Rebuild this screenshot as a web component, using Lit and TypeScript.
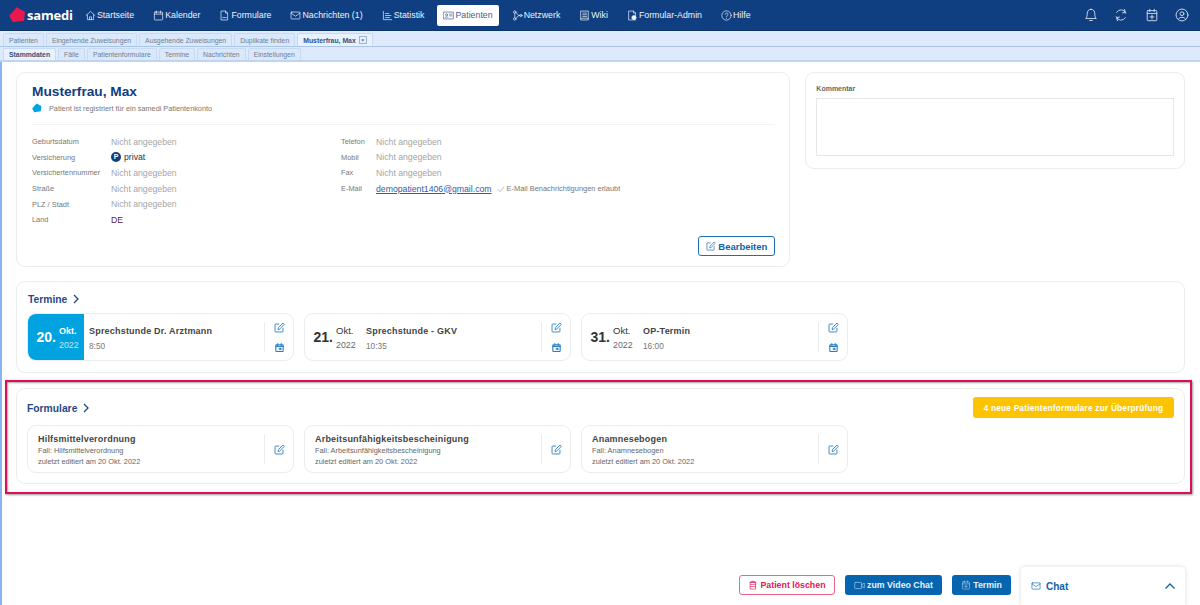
import { LitElement, css, html, svg } from 'lit';
import { customElement } from 'lit/decorators.js';

const ico = (size: number, body: unknown, sw = 1) => html`<svg width=${size} height=${size} viewBox="0 0 16 16" fill="none" stroke="currentColor" stroke-width=${sw} stroke-linecap="round" stroke-linejoin="round">${body}</svg>`;

const icons: Record<string, unknown> = {
	home: svg`<path d="M1.5 8 8 2l6.5 6"/><path d="M3.5 7v7h9V7"/><path d="M6.5 14v-4h3v4"/>`,
	cal: svg`<rect x="2" y="3" width="12" height="11.5" rx="1"/><path d="M2 6h12M5 1.5v3M11 1.5v3"/>`,
	doc: svg`<path d="M3.5 1.5h6l3 3v10h-9z"/><path d="M9.5 1.5v3h3M5.5 11h5"/>`,
	mail: svg`<rect x="1.5" y="3" width="13" height="10" rx="1"/><path d="m1.5 4.5 6.5 4.5 6.5-4.5"/>`,
	chart: svg`<path d="M2 2v12h12"/><path d="M5 5h5M5 8h8M5 11h6"/>`,
	card: svg`<rect x="1" y="3" width="14" height="10"/><circle cx="5.2" cy="7" r="1.5"/><path d="M3 11c.4-1.8 4-1.8 4.4 0M9.5 6H13M9.5 8.5H13"/>`,
	net: svg`<circle cx="4" cy="3" r="1.8"/><circle cx="4" cy="13" r="1.8"/><circle cx="13" cy="8" r="1.6"/><path d="M4 4.8v6.4M5.8 3.5C8 5 7 8 11.4 8M5.8 12.5C8 11 7 8 11.4 8"/>`,
	book: svg`<path d="M3 1.5h10.5v13H3z"/><path d="M3 12h10.5M5.5 4.5H11M5.5 7H11M5.5 9.5H11"/>`,
	admin: svg`<path d="M3 1.5h6.5l3 3v10H3z"/><path d="M9.5 1.5v3h3"/><circle cx="10" cy="11" r="3" fill="currentColor"/>`,
	help: svg`<circle cx="8" cy="8" r="6.8"/><path d="M6 6.2C6 3.6 10.2 3.7 10.2 6.2 10.2 8 8 8 8 9.8"/><path d="M8 12v.2"/>`,
	bell: svg`<path d="M8 1.5c-3 0-4.3 2.3-4.3 5 0 3-.7 4.3-1.7 5.5h12c-1-1.2-1.7-2.5-1.7-5.5 0-2.7-1.3-5-4.3-5z"/><path d="M6.5 14.3h3"/>`,
	sync: svg`<path d="M13.5 6A5.8 5.8 0 0 0 3 5M2.5 10A5.8 5.8 0 0 0 13 11"/><path d="M12 1.5 13 5l-3.2.6M4 14.5 3 11l3.2-.6"/>`,
	calplus: svg`<rect x="2.5" y="3" width="11" height="11.5" rx="1"/><path d="M2.5 6.2h11M5.5 1.5V4M10.5 1.5V4M8 8v4.5M5.8 10.2h4.4"/>`,
	user: svg`<circle cx="8" cy="8" r="6.8"/><circle cx="8" cy="6.5" r="2.2"/><path d="M4 12.8c.6-3 7.4-3 8 0"/>`,
	edit: svg`<path d="M13 9v4.5a1 1 0 0 1-1 1H2.5a1 1 0 0 1-1-1V4a1 1 0 0 1 1-1H7"/><path d="M6 10.5 6.6 8 13 1.5l2 2L8.5 10z"/>`,
	trash: svg`<path d="M3 3.5h10M6 3.5V2h4v1.5"/><path d="M4 3.5h8v11H4z"/><path d="M4 7h8M4 10.5h8"/>`,
	video: svg`<rect x="1" y="3.5" width="10" height="9" rx="1"/><path d="m11 7 4-2.5v7L11 9"/>`,
};

const NAV = [
	['home', 'Startseite'], ['cal', 'Kalender'], ['doc', 'Formulare'], ['mail', 'Nachrichten (1)'],
	['chart', 'Statistik'], ['card', 'Patienten'], ['net', 'Netzwerk'], ['book', 'Wiki'],
	['admin', 'Formular-Admin'], ['help', 'Hilfe'],
];

const TABS = ['Patienten', 'Eingehende Zuweisungen', 'Ausgehende Zuweisungen', 'Duplikate finden'];
const SUBTABS = ['Stammdaten', 'Fälle', 'Patientenformulare', 'Termine', 'Nachrichten', 'Einstellungen'];

const NA = 'Nicht angegeben';
const LEFT = [['Geburtsdatum', NA], ['Versicherung', 'privat'], ['Versichertennummer', NA], ['Straße', NA], ['PLZ / Stadt', NA], ['Land', 'DE']];
const RIGHT = [['Telefon', NA], ['Mobil', NA], ['Fax', NA]];

const APPTS = [
	{ day: '20.', mon: 'Okt.', year: '2022', title: 'Sprechstunde Dr. Arztmann', time: '8:50', today: true },
	{ day: '21.', mon: 'Okt.', year: '2022', title: 'Sprechstunde - GKV', time: '10:35', today: false },
	{ day: '31.', mon: 'Okt.', year: '2022', title: 'OP-Termin', time: '16:00', today: false },
];

const FORMS = ['Hilfsmittelverordnung', 'Arbeitsunfähigkeitsbescheinigung', 'Anamnesebogen'];

const PENTAGON = 'M.3 8.7 7.7.3 16 4.7 15 13.7 3.7 15.3z';

@customElement('app-root')
export class AppRoot extends LitElement {
	static styles = css`
    :host {
      display: block;
      position: relative;
      width: 1200px;
      height: 605px;
      overflow: hidden;
      background: #fff;
      font-family: "Liberation Sans", Arial, sans-serif;
      color: #555;
    }

    .nav {
      height: 31px;
      background: #0f3f80;
      display: flex;
      align-items: center;
      color: #fff;
      font-size: 8.8px;
      box-sizing: border-box;
      border-bottom: 1px solid #0c3468;
    }

    .logo {
      display: flex;
      align-items: center;
      width: 79px;
      padding-left: 9px;
      box-sizing: border-box;
      flex: none;
      gap: 1px;
    }

    .logo b {
      font-family: "Open Sans", sans-serif;
      font-size: 13px;
      font-weight: 700;
      letter-spacing: -0.2px;
    }

    .nav-item {
      display: flex;
      align-items: center;
      gap: 1px;
      height: 21px;
      padding: 0 6px;
      margin-right: 7px;
      border-radius: 2px;
      color: #eef3f9;
      white-space: nowrap;
    }

    .nav-item.active {
      background: #fff;
      color: #44618c;
    }

    .nav-right {
      margin-left: auto;
      display: flex;
      gap: 16.5px;
      padding-right: 11px;
      color: #dbe5f1;
    }

    .tabs {
      height: 16px;
      background: #dceafc;
      border-bottom: 1px solid #a9c6ea;
      box-sizing: border-box;
      display: flex;
      gap: 2px;
      padding: 2px 0 0 3px;
      font-size: 6.85px;
      color: #6d7f96;
    }

    .tabs.sub {
      height: 15px;
      border-bottom: 2px solid #bcd5f3;
      padding-top: 1px;
    }

    .tab {
      display: flex;
      align-items: center;
      gap: 3px;
      padding: 0 5px;
      border: 1px solid #c6daf3;
      border-bottom: 0;
      background: #d9e8fb;
      border-radius: 2px 2px 0 0;
      white-space: nowrap;
    }

    .tab.active {
      background: #e8f1fd;
      color: #33517f;
      font-weight: 700;
    }

    .close {
      width: 6px;
      height: 6px;
      border: 1px solid #9db4d2;
      font-size: 6px;
      line-height: 6px;
      text-align: center;
      font-weight: 400;
    }

    .page {
      height: 543px;
      border-left: 2px solid #8ab4f0;
      padding: 10px 15px 0 14px;
      box-sizing: border-box;
    }

    .top {
      display: flex;
      align-items: flex-start;
      gap: 15px;
    }

    .card {
      border: 1px solid #ececec;
      border-radius: 9px;
      background: #fff;
      box-sizing: border-box;
    }

    .patient {
      width: 775px;
      height: 195px;
      padding: 10px 14px 9px 15px;
      display: flex;
      flex-direction: column;
    }

    h1 {
      margin: 0;
      font-size: 13.7px;
      line-height: 18px;
      color: #10407f;
    }

    .reg {
      display: flex;
      align-items: center;
      gap: 7px;
      font-size: 7.3px;
      color: #777;
      margin-top: 2px;
      padding-bottom: 11px;
      border-bottom: 1px solid #f2f2f2;
    }

    .cols {
      display: flex;
      margin-top: 9px;
    }

    .col-l {
      width: 309px;
      display: grid;
      grid-template-columns: 79px 1fr;
      grid-auto-rows: 15.6px;
      align-items: center;
    }

    .col-r {
      display: grid;
      grid-template-columns: 35px 1fr;
      grid-auto-rows: 15.6px;
      align-items: center;
    }

    .lbl {
      font-size: 7.4px;
      color: #777;
    }

    .val {
      font-size: 8.7px;
      color: #a5a5a5;
      display: flex;
      align-items: center;
      gap: 3px;
    }

    .val.dark {
      color: #333;
    }

    .val.de {
      color: #5a2440;
    }

    .pbadge {
      width: 10px;
      height: 10px;
      border-radius: 50%;
      background: #10407f;
      color: #fff;
      font-size: 7px;
      font-weight: 700;
      line-height: 10px;
      text-align: center;
    }

    .val a {
      color: #2f5da6;
      text-decoration: underline;
    }

    .allowed {
      display: inline-flex;
      align-items: center;
      gap: 2px;
      margin-left: 2px;
      font-size: 7.45px;
      color: #777;
    }

    .edit-row {
      margin-top: auto;
      margin-bottom: 1px;
      display: flex;
      justify-content: flex-end;
    }

    .btn {
      display: inline-flex;
      align-items: center;
      justify-content: center;
      gap: 2px;
      height: 20px;
      border-radius: 3px;
      box-sizing: border-box;
      font-size: 8.8px;
      font-weight: 700;
      white-space: nowrap;
    }

    .btn.outline {
      width: 77px;
      border: 1px solid #1a70b8;
      color: #0f62ac;
      font-size: 9.5px;
    }

    .comment {
      width: 380px;
      height: 97px;
      padding: 11px 10px;
    }

    .comment label {
      display: block;
      font-size: 7px;
      font-weight: 700;
      color: #666;
      line-height: 9px;
    }

    .comment div {
      height: 58px;
      margin-top: 5px;
      border: 1px solid #e6e6e6;
      box-sizing: border-box;
    }

    .section {
      margin-top: 14px;
      width: 1169px;
      height: 92px;
      padding: 9px 10px 0;
    }

    .sec-head {
      display: flex;
      align-items: center;
      justify-content: space-between;
      height: 16px;
      margin-left: 1px;
    }

    .sec-title {
      display: flex;
      align-items: center;
      gap: 6px;
      font-size: 10.3px;
      font-weight: 700;
      color: #1f4a85;
    }

    .items {
      display: flex;
      gap: 10px;
      margin-top: 6px;
    }

    .item {
      width: 267px;
      height: 48px;
      border: 1px solid #ececec;
      border-radius: 9px;
      box-sizing: border-box;
      display: flex;
      overflow: hidden;
    }

    .date {
      width: 56px;
      flex: none;
      display: flex;
      align-items: center;
      justify-content: flex-end;
      gap: 2px;
      color: #333;
      padding-right: 5px;
      box-sizing: border-box;
    }

    .date.today {
      background: #00a3e0;
      color: #fff;
    }

    .day {
      font-size: 14px;
      font-weight: 700;
      margin-right: 1px;
    }

    .stamp {
      padding-top: 2px;
      width: 20px;
    }

    .mon {
      font-size: 9.5px;
      line-height: 14px;
    }

    .today .mon {
      font-weight: 700;
      font-size: 9px;
    }

    .year {
      font-size: 8.8px;
      line-height: 14px;
      opacity: .75;
    }

    .info {
      flex: 1;
      padding: 2px 0 0 5px;
      min-width: 0;
      display: flex;
      flex-direction: column;
      justify-content: center;
      gap: 5px;
    }

    .title {
      font-size: 9px;
      font-weight: 700;
      letter-spacing: .2px;
      color: #444;
      white-space: nowrap;
    }

    .time {
      font-size: 8.3px;
      color: #777;
    }

    .actions {
      width: 28px;
      flex: none;
      margin: 8px 0;
      border-left: 1px solid #ececec;
      display: flex;
      flex-direction: column;
      align-items: center;
      justify-content: space-between;
      color: #2a7fc4;
    }

    .form-info {
      flex: 1;
      padding: 2px 0 0 10px;
      display: flex;
      flex-direction: column;
      justify-content: center;
      font-size: 7.4px;
      line-height: 10.5px;
      color: #666;
    }

    .form-info .title {
      line-height: 13px;
    }

    .highlight {
      margin: 7px 0 0 -11px;
      width: 1187px;
      height: 114px;
      border: 2px solid #de0f50;
      box-sizing: border-box;
      padding: 6px 0 0 9px;
      box-shadow: 1px 1px 2px rgba(0, 0, 0, .4), inset 1px 1px 2px rgba(0, 0, 0, .35);
    }

    .highlight .section {
      margin-top: 0;
      height: 96px;
      padding-top: 11px;
    }

    .highlight .sec-title {
      margin-left: -1px;
    }

    .highlight .items {
      margin-top: 9px;
    }

    .highlight .actions {
      justify-content: center;
    }

    .pill {
      width: 201px;
      height: 21px;
      margin-top: -1px;
      border-radius: 3px;
      background: #fcc400;
      color: #fff;
      font-size: 8.3px;
      font-weight: 700;
      letter-spacing: .2px;
      display: flex;
      align-items: center;
      justify-content: center;
    }

    .footer {
      display: flex;
      justify-content: flex-end;
      gap: 10px;
      margin-top: 81px;
      padding-right: 174px;
    }

    .btn.danger {
      width: 96px;
      border: 1px solid #f0628a;
      color: #e6154f;
    }

    .btn.solid {
      background: #0764ae;
      color: #e8f1f9;
    }

    .btn.solid svg {
      color: #a9c8e4;
    }

    .chat {
      position: absolute;
      right: 15px;
      bottom: 0;
      width: 164px;
      height: 38px;
      padding: 0 10px;
      box-sizing: border-box;
      background: #fff;
      border-radius: 4px 4px 0 0;
      box-shadow: 0 0 5px rgba(0, 0, 0, .15);
      display: flex;
      align-items: center;
      gap: 5px;
      color: #0f62ac;
      font-size: 10px;
      font-weight: 700;
    }

    .chat svg:last-child {
      margin-left: auto;
    }
  `;

	renderInfoRow(label: string, value: string) {
		let cls = 'val';
		if (value === 'privat') cls += ' dark';
		if (value === 'DE') cls += ' de';
		return html`
      <div class="lbl">${label}</div>
      <div class=${cls}>
        ${value === 'privat' ? html`<span class="pbadge">P</span>` : ''}${value}
      </div>
    `;
	}

	renderChevron() {
		return html`<svg width="6" height="10" viewBox="0 0 6 10" fill="none" stroke="currentColor" stroke-width="1.3"><path d="m1 1 4 4-4 4"/></svg>`;
	}

	render() {
		return html`
      <div class="nav">
        <div class="logo">
          <svg width="17" height="16" viewBox="0 0 17 16"><path d=${PENTAGON} fill="#e8194f"/></svg>
          <b>samedi</b>
        </div>
        ${NAV.map(([icon, label]) => html`
          <div class="nav-item ${label === 'Patienten' ? 'active' : ''}">${ico(11, icons[icon])}${label}</div>
        `)}
        <div class="nav-right">
          ${['bell', 'sync', 'calplus', 'user'].map(n => ico(14, icons[n]))}
        </div>
      </div>

      <div class="tabs">
        ${TABS.map(t => html`<div class="tab">${t}</div>`)}
        <div class="tab active">Musterfrau, Max <span class="close">×</span></div>
      </div>
      <div class="tabs sub">
        ${SUBTABS.map((t, i) => html`<div class="tab ${i === 0 ? 'active' : ''}">${t}</div>`)}
      </div>

      <div class="page">
        <div class="top">
          <div class="card patient">
            <h1>Musterfrau, Max</h1>
            <div class="reg">
              <svg width="10" height="10" viewBox="0 0 17 16"><path d=${PENTAGON} fill="#00a3e0"/></svg>
              Patient ist registriert für ein samedi Patientenkonto
            </div>
            <div class="cols">
              <div class="col-l">${LEFT.map(([l, v]) => this.renderInfoRow(l, v))}</div>
              <div class="col-r">
                ${RIGHT.map(([l, v]) => this.renderInfoRow(l, v))}
                <div class="lbl">E-Mail</div>
                <div class="val">
                  <a>demopatient1406@gmail.com</a>
                  <span class="allowed">${ico(8, svg`<path d="m2 9 4 4 8-9"/>`)} E-Mail Benachrichtigungen erlaubt</span>
                </div>
              </div>
            </div>
            <div class="edit-row">
              <div class="btn outline">${ico(10, icons.edit)}Bearbeiten</div>
            </div>
          </div>
          <div class="card comment">
            <label>Kommentar</label>
            <div></div>
          </div>
        </div>

        <div class="card section">
          <div class="sec-head">
            <div class="sec-title">Termine ${this.renderChevron()}</div>
          </div>
          <div class="items">
            ${APPTS.map(a => html`
              <div class="item">
                <div class="date ${a.today ? 'today' : ''}">
                  <span class="day">${a.day}</span>
                  <div class="stamp"><div class="mon">${a.mon}</div><div class="year">${a.year}</div></div>
                </div>
                <div class="info">
                  <div class="title">${a.title}</div>
                  <div class="time">${a.time}</div>
                </div>
                <div class="actions">
                  ${ico(11, icons.edit, 1.3)}
                  ${ico(9, svg`<rect x="1.5" y="3" width="13" height="12" rx="1" stroke-width="2"/><path d="M1.5 6h13M5 1v3M11 1v3" stroke-width="2"/><rect x="8" y="9" width="3" height="3" fill="currentColor"/>`)}
                </div>
              </div>
            `)}
          </div>
        </div>

        <div class="highlight">
          <div class="card section">
            <div class="sec-head">
              <div class="sec-title">Formulare ${this.renderChevron()}</div>
              <div class="pill">4 neue Patientenformulare zur Überprüfung</div>
            </div>
            <div class="items">
              ${FORMS.map(f => html`
                <div class="item">
                  <div class="form-info">
                    <div class="title">${f}</div>
                    <div>Fall: ${f}</div>
                    <div>zuletzt editiert am 20 Okt. 2022</div>
                  </div>
                  <div class="actions">${ico(11, icons.edit, 1.3)}</div>
                </div>
              `)}
            </div>
          </div>
        </div>

        <div class="footer">
          <div class="btn danger">${ico(10, icons.trash)}Patient löschen</div>
          <div class="btn solid" style="width:97px">${ico(11, icons.video)}zum Video Chat</div>
          <div class="btn solid" style="width:59px">${ico(10, icons.calplus)}Termin</div>
        </div>
      </div>

      <div class="chat">
        ${ico(10, icons.mail)} Chat
        <svg width="10" height="6" viewBox="0 0 10 6" fill="none" stroke="currentColor" stroke-width="1.3"><path d="m.5 5.5 4.5-4.5 4.5 4.5"/></svg>
      </div>
    `;
	}
}
